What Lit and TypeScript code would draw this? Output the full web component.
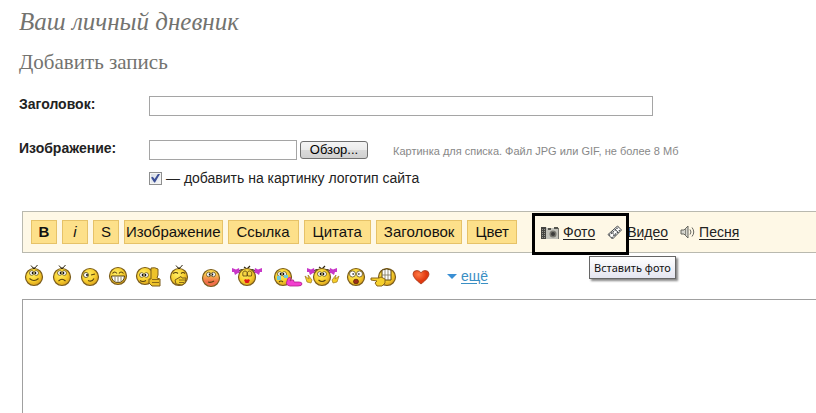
import { LitElement, html, svg, css } from "lit";
import { customElement } from "lit/decorators.js";

const face = (cx: number, cy = 15, fill = "url(#skin)") => svg`
  <circle cx=${cx} cy=${cy} r="8.5" fill=${fill} stroke="#7a5c1c" stroke-width="1.2"/>`;

const hair = (cx: number) => svg`
  <path d="M${cx} 7l-3-3.500M${cx} 7v-2M${cx} 7l3.500-4" stroke="#2e2610" fill="none"/>`;

const eyes = (cx: number, cy: number) => svg`
  <g fill="#fff" stroke="#4b3c10" stroke-width=".7">
    <ellipse cx=${cx - 2.3} cy=${cy} rx="2.200" ry="2.300"/>
    <ellipse cx=${cx + 2.3} cy=${cy} rx="2.200" ry="2.300"/>
  </g>
  <path d="M${cx - 1.6} ${cy - 1}v2M${cx + 1.6} ${cy - 1}v2" stroke="#111" stroke-width="1.200"/>`;

const bows = (cx: number) => svg`
  <path d="M${cx - 3} 8q-3-1-5 1M${cx + 3} 8q3-1 5 1M${cx} 7l-3-2M${cx} 7l3-3" stroke="#2e2610" fill="none" stroke-width="1.200"/>
  <path d="M${cx - 8} 6l-3 1.500-4-1.500v4h2l1 3 3-2 2 0zM${cx + 8} 6l3 1.500 4-1.500v4h-2l-1 3-3-2-2 0z" fill="#c838c8"/>`;

const line = (d: string) => svg`<path d=${d} stroke="#5a430c" stroke-width="1.100" fill="none"/>`;

const SMILES = [
  { name: "улыбка", w: 28, art: svg`${face(14)}${hair(14)}${eyes(14, 11)}${line("M9.500 16.500q4.500 4 9 0")}` },
  { name: "грусть", w: 28, art: svg`${face(14)}${hair(14)}${eyes(14, 11)}${line("M10.500 19q3.500-3.500 7 0")}` },
  { name: "подмигивание", w: 28, art: svg`${face(14)}
      <ellipse cx="10" cy="13" rx="2.500" ry="2.500" fill="#fff" stroke="#4b3c10" stroke-width=".8"/>
      <path d="M11 12v2" stroke="#111" stroke-width="1.500"/>${line("M15 13l4-1M12 18.500q4 2 6-2")}` },
  { name: "смех", w: 28, art: svg`${face(14, 14)}${line("M8.500 11.500q2-3 4.500 0M15 11.500q2-3 4.500 0")}
      <path d="M7.500 14h13q-.5 6.500-6.500 6.500t-6.500-6.500z" fill="#fff" stroke="#5a430c"/>
      <path d="M11 14.500v5M14 14.500v6M17 14.500v5" stroke="#8c8468"/>` },
  { name: "класс", w: 32, art: svg`${face(13, 14)}${eyes(12, 13)}${line("M8 18.500q3 2 6 0")}
      <path d="M19 6q4-1 7 1v6l-1 3 3 1v7h-8l-3-3v-4h2z" fill="#edc22a" stroke="#7a5c1c"/>
      <path d="M20 17.500h7M20 20.500h7" stroke="#8c6a16"/>` },
  { name: "хихиканье", w: 32, art: svg`${face(15)}${hair(15)}${line("M9 11.500q3-2 5 0M17 11.500q2-2 4 0")}
      <path d="M11 18l6-3.500 1 1.500h4l-1 5-3 2-6-1z" fill="#f3d02d" stroke="#7a5c1c"/>
      <path d="M15 18h6M15 20.500h5" stroke="#8c6a16"/>` },
  { name: "смущение", w: 30, art: svg`${face(15, 16, "url(#blush)")}${eyes(15, 12.5)}${line("M12 20q3 1 6-1")}` },
  { name: "поцелуй", w: 42, art: svg`${bows(21)}${face(21)}
      <path d="M17 14q-1-5 2-5t2 5zM21.500 14q-1-5 2-5t2 5z" fill="#f6d544" stroke="#5a430c" stroke-width=".8"/>
      <path d="M18 18l2-1 1 1 1-1 2 1-1.500 3h-3z" fill="#e01818"/>` },
  { name: "слёзы", w: 36, art: svg`${face(15)}${eyes(14, 12)}
      <path d="M9 14h4v4h-4zM16 13h4v3h-4z" fill="#6fcbdc"/>${line("M11 20q2-2 4 0")}
      <path d="M19 19q1-5 4-3l-1 3 2-1q2-1 2 2h5q3 0 3 2t-4 2h-8q-5-1-3-5z" fill="#f33fd0" stroke="#b0208a" stroke-width=".8"/>` },
  { name: "объятия", w: 38, art: svg`${bows(18)}${face(18)}${eyes(18, 12)}${line("M14.500 18q3.500 3 7 0")}
      <path d="M1 14l4 3-1-4 4 5-1 3-4-1zM35 14l-4 3 1-4-4 5 1 3 4-1z" fill="#f5cd28" stroke="#a07a1c" stroke-width=".7"/>` },
  { name: "удивление", w: 28, art: svg`${face(14)}
      <circle cx="10.500" cy="12" r="3" fill="#fff" stroke="#4b3c10" stroke-width=".7"/>
      <circle cx="17.500" cy="12" r="3" fill="#fff" stroke="#4b3c10" stroke-width=".7"/>
      <path d="M10.500 12h1.300M16.200 12h1.300" stroke="#111" stroke-width="1.300"/>
      <ellipse cx="14" cy="19.500" rx="2.500" ry="2.300" fill="#9b2c1a" stroke="#5a2a05" stroke-width=".8"/>` },
  { name: "насмешка", w: 34, art: svg`${face(17)}
      <path d="M12 8q5-2 9 0v10h-9z" fill="#fff" stroke="#5a430c"/>
      <path d="M12 13h9M15 8v10M18 8v10" stroke="#7c7458" stroke-width=".8"/>
      <path d="M1 16h8l2-1 4 2v4l-3 3h-5l-2-3 2-2-6-1z" fill="#f6d02c" stroke="#8b671a"/>` },
  { name: "сердце", w: 34, art: svg`
      <path d="M17 22q-8-6-8-10 0-3.500 4-3.500 3 0 4 2.500 1-2.500 4-2.500 4 0 4 3.500 0 4-8 10z" fill="url(#heart)" stroke="#a53a1c" stroke-width=".8"/>` },
];

const CameraIcon = svg`
  <path d="M0 1h5l1 1h12v11H0z" fill="#c2c2ba"/>
  <path d="M0 1h5v12H0z" fill="#444441"/>
  <path d="M1.500 3v9M3.500 3v9" stroke="#96968e" stroke-dasharray="1 1"/>
  <path d="M7 2h3v2H7zM13 1h4v2h-4z" fill="#55554f"/>
  <circle cx="12" cy="8" r="3.500" fill="#77776f"/>
  <circle cx="12" cy="8" r="2" fill="#3c3c3a"/>
  <path d="M17.500 2v11" stroke="#77776f"/>`;
const FilmIcon = svg`
  <path d="M1 9.500L10.500 1l4 4L5.500 14z" fill="#fff" stroke="#4a4e50"/>
  <path d="M2 10.500L11.500 2M4.500 13L13.500 4.500" stroke="#4a4e50" stroke-width="1.300" stroke-dasharray="1.500 1"/>
  <path d="M4.500 7l4 4M8 4l3.500 4" stroke="#4a4e50"/>`;
const SoundIcon = svg`
  <path d="M1 5h3l4-4v12l-4-4H1z" fill="#d5d5ce" stroke="#66665f"/>
  <path d="M5.500 3.500v7" stroke="#88887f"/>
  <path d="M10 4.500q2 2.500 0 5M12 2.500q3.500 4.500 0 9" fill="none" stroke="#66665f"/>`;

@customElement("app-root")
export class AppRoot extends LitElement {
  static styles = css`
    :host {
      display: block;
      height: 100vh;
      overflow: hidden;
      background: #fff;
      color: #222;
      font: 14px/20px "Liberation Sans", Arial, sans-serif;
    }
    * { box-sizing: border-box; }
    .page { padding: 8px 0 0 19px; }
    h1, h2 {
      margin: 0;
      color: #73736f;
      font-family: "Liberation Serif", Georgia, serif;
      font-weight: 400;
    }
    h1 { font-size: 25px; line-height: 28px; font-style: italic; }
    h2 { margin-top: 12px; font-size: 21px; line-height: 28px; }
    .row {
      display: grid;
      grid-template-columns: 130px 1fr;
      align-items: start;
    }
    .title-row { margin-top: 20px; }
    .image-row { margin-top: 24px; }
    .name { font-weight: 700; line-height: 16px; white-space: nowrap; }
    .field {
      height: 20px;
      padding: 0 4px;
      border: 1px solid #a5a5a5;
      background: #fff;
      font: inherit;
    }
    .wide { width: 504px; max-width: 100%; }
    .upload { display: flex; align-items: center; }
    .path { width: 148px; }
    .browse {
      width: 68px;
      height: 18px;
      margin-left: 3px;
      padding: 0;
      border: 1px solid #707070;
      border-radius: 3px;
      background: linear-gradient(#f4f4f4, #ebebeb 50%, #dadada 50%, #d0d0d0);
      color: #000;
      font: 13px/16px "Liberation Sans", Arial, sans-serif;
    }
    .hint {
      margin-left: 25px;
      padding-top: 2px;
      color: #888;
      font-size: 11px;
      line-height: 16px;
      white-space: nowrap;
    }
    .logo { display: flex; align-items: center; gap: 4px; margin-top: 8px; }
    .check {
      appearance: none;
      width: 13px;
      height: 13px;
      margin: 0;
      border: 1px solid #8e8f8f;
      background: linear-gradient(135deg, #d3dae2, #f8f9fa);
      box-shadow: inset 0 0 0 1px #f4f4f4;
      display: grid;
      place-items: center;
    }
    .check:checked::before {
      content: "";
      width: 9px;
      height: 9px;
      background: #3c4f96;
      clip-path: polygon(0 45%, 20% 35%, 40% 60%, 80% 0, 100% 5%, 45% 100%, 35% 100%);
    }
    .editor { margin: 23px 0 0 3px; }
    .toolbar {
      display: flex;
      align-items: center;
      gap: 5px;
      height: 42px;
      padding-left: 8px;
      border: 1px solid #b9b9af;
      border-right: 0;
      background: #fef8e6;
    }
    .tag {
      height: 24px;
      min-width: 26px;
      padding: 0 7px;
      border: 1px solid #e6c268;
      background: #fde08a;
      color: #111;
      font: 15px/20px "Liberation Sans", Arial, sans-serif;
      white-space: nowrap;
    }
    .bold { font-weight: 700; }
    .italic { font-style: italic; }
    .bold, .italic, .strike { padding: 0; }
    .snug { padding: 0 1px; }
    .roomy { padding: 0 8px; }
    .media { display: flex; align-items: center; margin-left: 19px; }
    .item { position: relative; display: flex; align-items: center; gap: 4px; }
    .item + .item { margin-left: 12px; }
    a { color: #222; text-underline-offset: 2px; }
    .frame {
      position: absolute;
      inset: -9px -34px -13px -9px;
      border: 3px solid #000;
      pointer-events: none;
      z-index: 1;
    }
    .tip {
      position: absolute;
      left: 48px;
      top: 34px;
      padding: 0 4px;
      border: 1px solid #666;
      background: linear-gradient(#fff, #e4e5f0);
      box-shadow: 2px 2px 2px #888;
      color: #111;
      font: 11px/21px "Noto Sans", Tahoma, sans-serif;
      white-space: nowrap;
      z-index: 2;
    }
    .smiles { display: flex; align-items: center; height: 46px; margin-left: -2px; }
    .smile { display: block; padding: 0; border: 0; background: none; }
    svg { display: block; flex: none; }
    .paints { position: absolute; }
    .more { display: flex; align-items: center; gap: 4px; margin-left: 9px; }
    .more a { color: #3a8fc4; }
    .arrow { border: 5px solid transparent; border-top-color: #3a8fd4; border-bottom: 0; }
    .text {
      display: block;
      width: 100%;
      height: 240px;
      padding: 8px;
      border: 1px solid #a0a0a0;
      border-right: 0;
      resize: none;
      font: inherit;
    }
  `;

  render() {
    return html`
      <svg class="paints" width="0" height="0" aria-hidden="true">
        <defs>
          <radialGradient id="skin" cx="40%" cy="35%" r="65%"><stop offset="0" stop-color="#ffee66"/><stop offset=".6" stop-color="#f8d030"/><stop offset="1" stop-color="#dda51c"/></radialGradient>
          <linearGradient id="blush" x2="0" y2="1"><stop offset=".2" stop-color="#fbd550"/><stop offset=".7" stop-color="#f0704a"/></linearGradient>
          <radialGradient id="heart" cx="35%" cy="30%"><stop offset="0" stop-color="#ff7a45"/><stop offset="1" stop-color="#e0380f"/></radialGradient>
        </defs>
      </svg>
      <main class="page">
        <h1>Ваш личный дневник</h1>
        <h2>Добавить запись</h2>
        <div class="row title-row">
          <label class="name" for="title">Заголовок:</label>
          <input class="field wide" id="title" type="text">
        </div>
        <div class="row image-row">
          <label class="name" for="path">Изображение:</label>
          <div>
            <div class="upload">
              <input class="field path" id="path" type="text">
              <button class="browse" type="button">Обзор...</button>
              <span class="hint">Картинка для списка. Файл JPG или GIF, не более 8 Мб</span>
            </div>
            <label class="logo">
              <input class="check" type="checkbox" checked>
              — добавить на картинку логотип сайта
            </label>
          </div>
        </div>
        <section class="editor">
          <div class="toolbar">
            <button class="tag bold" type="button">B</button>
            <button class="tag italic" type="button">i</button>
            <button class="tag strike" type="button">S</button>
            <button class="tag snug" type="button">Изображение</button>
            <button class="tag roomy" type="button">Ссылка</button>
            <button class="tag roomy" type="button">Цитата</button>
            <button class="tag" type="button">Заголовок</button>
            <button class="tag" type="button">Цвет</button>
            <div class="media">
              <span class="item">
                <svg width="18" height="13" viewBox="0 0 18 13">${CameraIcon}</svg>
                <a href="#photo">Фото</a>
                <span class="frame"></span>
                <span class="tip" role="tooltip">Вставить фото</span>
              </span>
              <span class="item">
                <svg width="16" height="15" viewBox="0 0 16 15">${FilmIcon}</svg>
                <a href="#video">Видео</a>
              </span>
              <span class="item">
                <svg width="15" height="14" viewBox="0 0 15 14">${SoundIcon}</svg>
                <a href="#song">Песня</a>
              </span>
            </div>
          </div>
          <div class="smiles">
            ${SMILES.map(
              (s) => html`<button class="smile" type="button" aria-label=${s.name}>
                <svg width=${s.w} height="28" viewBox="0 0 ${s.w} 28">${s.art}</svg>
              </button>`
            )}
            <span class="more"><span class="arrow"></span><a href="#more">ещё</a></span>
          </div>
          <textarea class="text" aria-label="Текст записи"></textarea>
        </section>
      </main>
    `;
  }
}
